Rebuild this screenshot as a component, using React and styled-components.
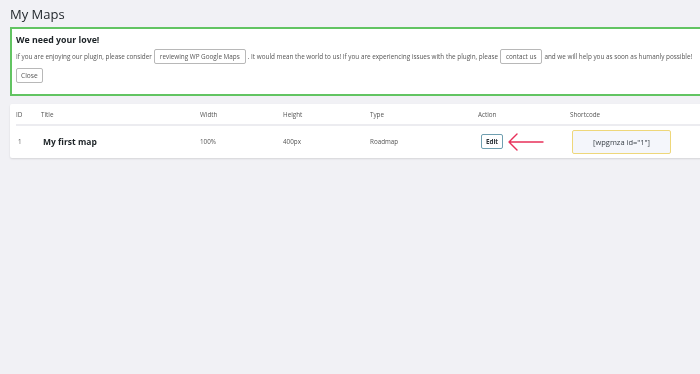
import React from "react";
import styled, { createGlobalStyle } from "styled-components";

const Global = createGlobalStyle`
  html, body {
    margin: 0;
    padding: 0;
    background: #f1f1f5;
    font-family: "Open Sans", "Liberation Sans", sans-serif;
    color: #3c434a;
  }
`;

const Page = styled.div`
  width: 700px;
  height: 374px;
  overflow: hidden;
  padding: 6px 0 0 10px;
  box-sizing: border-box;
  will-change: transform;
`;

const Heading = styled.h1`
  margin: 0 0 5px 0;
  font-size: 13px;
  font-weight: 400;
  color: #23282d;
  line-height: 16px;
`;

const Notice = styled.div`
  width: 720px;
  background: #fff;
  border: 2px solid #62c462;
  box-sizing: border-box;
  padding: 5px 6px 11px 4px;
  margin-bottom: 8px;
`;

const NoticeTitle = styled.div`
  font-size: 8.8px;
  line-height: 13px;
  font-weight: 700;
  color: #1d2327;
  margin-bottom: 2px;
`;

const NoticeText = styled.div`
  font-size: 6.35px;
  color: #555;
  display: flex;
  align-items: center;
  white-space: pre;
  margin-bottom: 4px;
`;

const ButtonRow = styled.div`
  display: flex;
`;

const SmallButton = styled.span`
  display: inline-flex;
  align-items: center;
  height: 15px;
  padding: 0 ${(p) => (p.inline ? "5px" : "4px")};
  border: 1px solid #b8b8b8;
  border-radius: 2px;
  background: #fff;
  color: #555;
  font-size: ${(p) => (p.inline ? "6.35px" : "6.6px")};
  box-sizing: border-box;
  margin: 0 ${(p) => (p.inline ? "2px" : "0")};
`;

const Card = styled.div`
  width: 720px;
  background: #fff;
  border-radius: 2px;
  box-shadow: 0 1px 2px rgba(0, 0, 0, 0.12);
  padding: 0 6px 1px 6px;
  box-sizing: border-box;
`;

const Row = styled.div`
  display: grid;
  grid-template-columns: 25px 159px 83px 87px 108px 92px 1fr;
  align-items: center;
  height: ${(p) => p.h}px;
  border-bottom: ${(p) => (p.divider ? "2px solid #ececf0" : "none")};
`;

const Cell = styled.div`
  font-size: ${(p) => (p.big ? "8.5px" : "6.3px")};
  font-weight: ${(p) => (p.big ? 700 : 400)};
  color: ${(p) => (p.big ? "#1d2327" : "#555")};
  padding-left: ${(p) => p.pl || 0}px;
  display: flex;
  align-items: center;
`;

const EditButton = styled.span`
  display: inline-flex;
  align-items: center;
  justify-content: center;
  width: 22px;
  height: 15px;
  border: 1px solid #6f9fb0;
  border-radius: 2px;
  font-size: 6.3px;
  font-weight: 700;
  color: #2c3338;
  box-sizing: border-box;
  margin-left: 3px;
`;

const Shortcode = styled.div`
  width: 99px;
  height: 24px;
  display: flex;
  align-items: center;
  justify-content: center;
  background: #f4f6fb;
  border: 1px solid #eed77a;
  border-radius: 2px;
  box-sizing: border-box;
  font-size: 7.5px;
  color: #3c434a;
  margin-left: 2px;
`;

const Arrow = () => (
  <svg width="38" height="20" viewBox="0 0 38 20" style={{ marginLeft: 4 }}>
    <path
      d="M2 10 H36 M10 2 L2 10 L10 18"
      fill="none"
      stroke="#e8305a"
      strokeWidth="1.4"
      strokeLinecap="round"
      strokeLinejoin="round"
    />
  </svg>
);

export default function App() {
  return (
    <Page>
      <Global />
      <Heading>My Maps</Heading>
      <Notice>
        <NoticeTitle>We need your love!</NoticeTitle>
        <NoticeText>
          If you are enjoying our plugin, please consider
          <SmallButton inline>reviewing WP Google Maps</SmallButton>
          . It would mean the world to us! If you are experiencing issues with the plugin, please
          <SmallButton inline>contact us</SmallButton>
          and we will help you as soon as humanly possible!
        </NoticeText>
        <ButtonRow>
          <SmallButton>Close</SmallButton>
        </ButtonRow>
      </Notice>
      <Card>
        <Row h={20} divider>
          <Cell>ID</Cell>
          <Cell>Title</Cell>
          <Cell>Width</Cell>
          <Cell>Height</Cell>
          <Cell>Type</Cell>
          <Cell>Action</Cell>
          <Cell>Shortcode</Cell>
        </Row>
        <Row h={31}>
          <Cell pl={2}>1</Cell>
          <Cell big pl={2}>My first map</Cell>
          <Cell>100%</Cell>
          <Cell>400px</Cell>
          <Cell>Roadmap</Cell>
          <Cell>
            <EditButton>Edit</EditButton>
            <Arrow />
          </Cell>
          <Cell>
            <Shortcode>[wpgmza id="1"]</Shortcode>
          </Cell>
        </Row>
      </Card>
    </Page>
  );
}
